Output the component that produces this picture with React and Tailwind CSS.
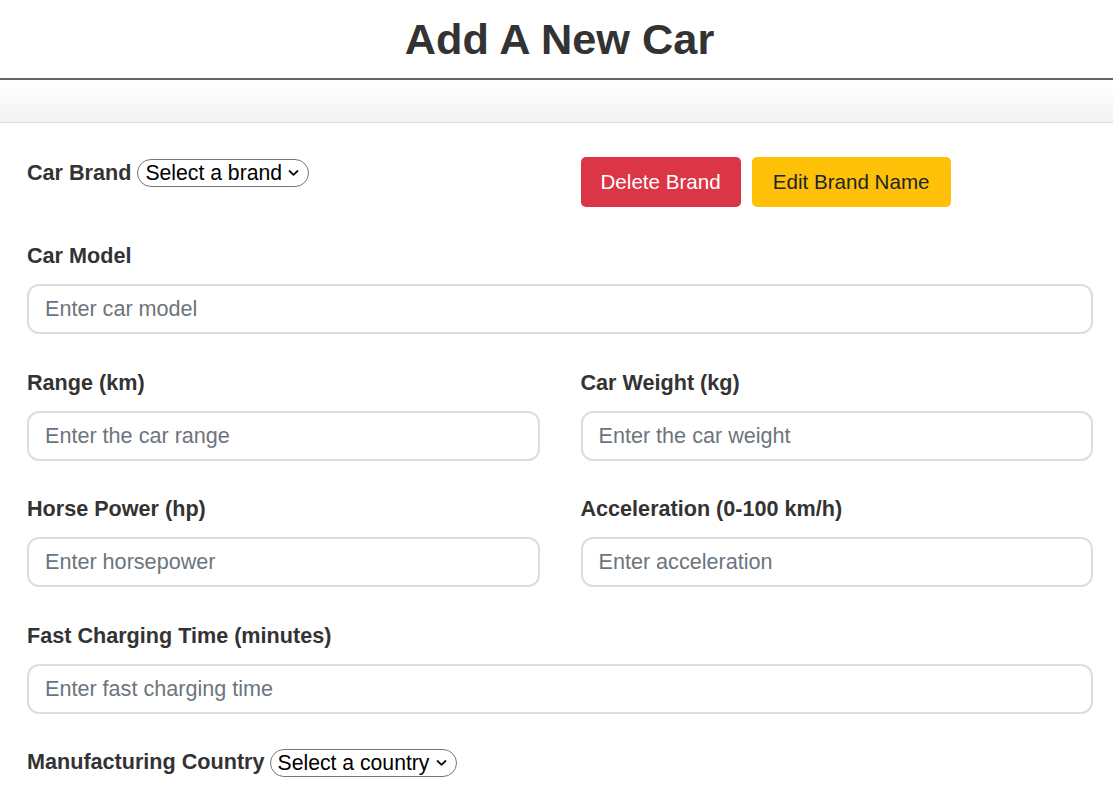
import React from "react";

function Chevron() {
  return (
    <svg width="11" height="7" viewBox="0 0 11 7" className="pointer-events-none absolute right-[10px] top-1/2 -translate-y-1/2">
      <path d="M1.5 1.5 L5.5 5.3 L9.5 1.5" fill="none" stroke="#111" strokeWidth="1.8" strokeLinecap="round" strokeLinejoin="round" />
    </svg>
  );
}

function Select({ placeholder }) {
  return (
    <span className="relative inline-flex">
      <select className="appearance-none h-[28px] rounded-[14px] border border-[#767676] bg-white pl-[7px] pr-[26px] text-[21.2px] leading-[26px] text-black font-normal outline-none">
        <option>{placeholder}</option>
      </select>
      <Chevron />
    </span>
  );
}

function Field({ label, placeholder }) {
  return (
    <div className="flex flex-col">
      <label className="text-[21.6px] font-bold text-[#333] leading-[24px] mb-[16px]">{label}</label>
      <input
        placeholder={placeholder}
        className="h-[50px] w-full rounded-[12px] border-2 border-[#dddddd] bg-white px-4 text-[21.6px] text-[#333] placeholder:text-[#6c757d] outline-none"
      />
    </div>
  );
}

export default function App() {
  return (
    <div className="min-h-screen bg-white" style={{ fontFamily: '"Liberation Sans", Arial, sans-serif' }}>
      <header className="h-[80px] flex items-center justify-center border-b-2 border-[#666]">
        <h1 className="text-[43.3px] font-bold text-[#333] leading-[50px] pl-[6px]">Add A New Car</h1>
      </header>
      <div className="h-[43px] bg-gradient-to-b from-white to-[#f3f3f3] border-b border-[#dddddd]" />
      <form className="pl-[27px] pr-[20px] pt-[34px]">
        <div className="grid grid-cols-2 gap-x-[41px] mb-[37px]">
          <div className="flex items-center gap-[6px] h-[30px] mt-[1px]">
            <span className="text-[21.6px] font-bold text-[#333]">Car Brand</span>
            <Select placeholder="Select a brand" />
          </div>
          <div className="flex gap-[11px]">
            <button type="button" className="h-[50px] px-[20px] rounded-[5px] bg-[#dc3545] text-white text-[20.6px]">Delete Brand</button>
            <button type="button" className="h-[50px] px-[21px] rounded-[5px] bg-[#ffc107] text-[#212529] text-[20.6px]">Edit Brand Name</button>
          </div>
        </div>
        <div className="mb-[36.5px]">
          <Field label="Car Model" placeholder="Enter car model" />
        </div>
        <div className="grid grid-cols-2 gap-x-[41px] mb-[36.5px]">
          <Field label="Range (km)" placeholder="Enter the car range" />
          <Field label="Car Weight (kg)" placeholder="Enter the car weight" />
        </div>
        <div className="grid grid-cols-2 gap-x-[41px] mb-[36.5px]">
          <Field label="Horse Power (hp)" placeholder="Enter horsepower" />
          <Field label="Acceleration (0-100 km/h)" placeholder="Enter acceleration" />
        </div>
        <div className="mb-[35px]">
          <Field label="Fast Charging Time (minutes)" placeholder="Enter fast charging time" />
        </div>
        <div className="flex items-center gap-[5px] h-[28px]">
          <span className="text-[21.6px] font-bold text-[#333]">Manufacturing Country</span>
          <Select placeholder="Select a country" />
        </div>
      </form>
    </div>
  );
}
